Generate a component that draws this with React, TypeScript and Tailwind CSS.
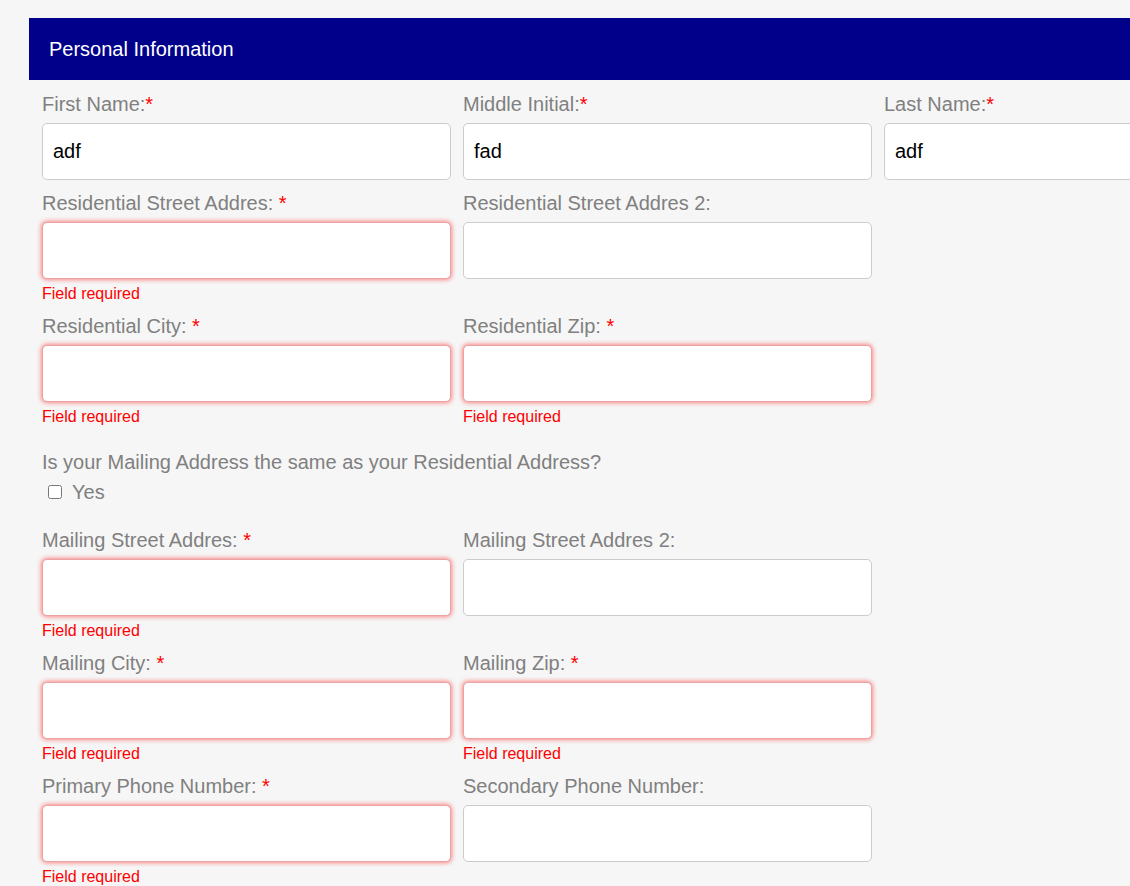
import React from 'react';

type Field = {
  label: string;
  required?: boolean;
  tight?: boolean; // asterisk without a space
  value?: string;
  error?: boolean;
};

const rows: Field[][] = [
  [
    { label: 'First Name:', required: true, tight: true, value: 'adf' },
    { label: 'Middle Initial:', required: true, tight: true, value: 'fad' },
    { label: 'Last Name:', required: true, tight: true, value: 'adf' },
  ],
  [
    { label: 'Residential Street Addres:', required: true, error: true },
    { label: 'Residential Street Addres 2:' },
  ],
  [
    { label: 'Residential City:', required: true, error: true },
    { label: 'Residential Zip:', required: true, error: true },
  ],
];

const mailingRows: Field[][] = [
  [
    { label: 'Mailing Street Addres:', required: true, error: true },
    { label: 'Mailing Street Addres 2:' },
  ],
  [
    { label: 'Mailing City:', required: true, error: true },
    { label: 'Mailing Zip:', required: true, error: true },
  ],
  [
    { label: 'Primary Phone Number:', required: true, error: true },
    { label: 'Secondary Phone Number:' },
  ],
];

const FormField: React.FC<{ field: Field }> = ({ field }) => (
  <div className="flex flex-col">
    <label className="text-[20px] leading-[23px] text-[#808080] whitespace-nowrap">
      {field.label}
      {field.required && (
        <span className="text-[#ff0000]">{field.tight ? '*' : ' *'}</span>
      )}
    </label>
    <input
      type="text"
      defaultValue={field.value ?? ''}
      className={`mt-[7px] h-[57px] w-full rounded-[5px] border bg-white px-[10px] text-[20px] text-black outline-none ${
        field.error
          ? 'border-[#e9a3a3] shadow-[0_0_4px_1px_rgba(255,60,60,0.6)]'
          : 'border-[#cccccc]'
      }`}
    />
    {field.error && (
      <div className="pt-[5px] h-[24px] text-[16px] leading-[19px] text-[#ff0000]">Field required</div>
    )}
  </div>
);

const FieldRows: React.FC<{ items: Field[][] }> = ({ items }) => (
  <div className="flex flex-col gap-y-[12px]">
    {items.map((row, i) => (
      <div key={i} className="grid grid-cols-[409px_409px_409px] gap-x-[12px] items-start">
        {row.map((f) => (
          <FormField key={f.label} field={f} />
        ))}
      </div>
    ))}
  </div>
);

export default function App() {
  return (
    <div
      className="w-[1130px] h-[886px] overflow-hidden bg-[#f6f6f6] pt-[18px] pl-[29px]"
      style={{ fontFamily: '"Liberation Sans", Arial, sans-serif' }}
    >
      <div className="w-[1300px]">
        <div className="h-[62px] bg-[#00008b] px-[20px] flex items-center text-[20px] text-white">
          Personal Information
        </div>
        <div className="pl-[13px] pt-[13px]">
          <FieldRows items={rows} />
          <div className="pt-[25px] pb-[26px]">
            <div className="text-[20px] leading-[22px] text-[#808080]">
              Is your Mailing Address the same as your Residential Address?
            </div>
            <label className="mt-[8px] flex items-center h-[22px] text-[20px] leading-[22px] text-[#808080]">
              <input type="checkbox" className="m-0 ml-[6px] w-[14px] h-[14px]" />
              <span className="ml-[10px]">Yes</span>
            </label>
          </div>
          <FieldRows items={mailingRows} />
        </div>
      </div>
    </div>
  );
}
